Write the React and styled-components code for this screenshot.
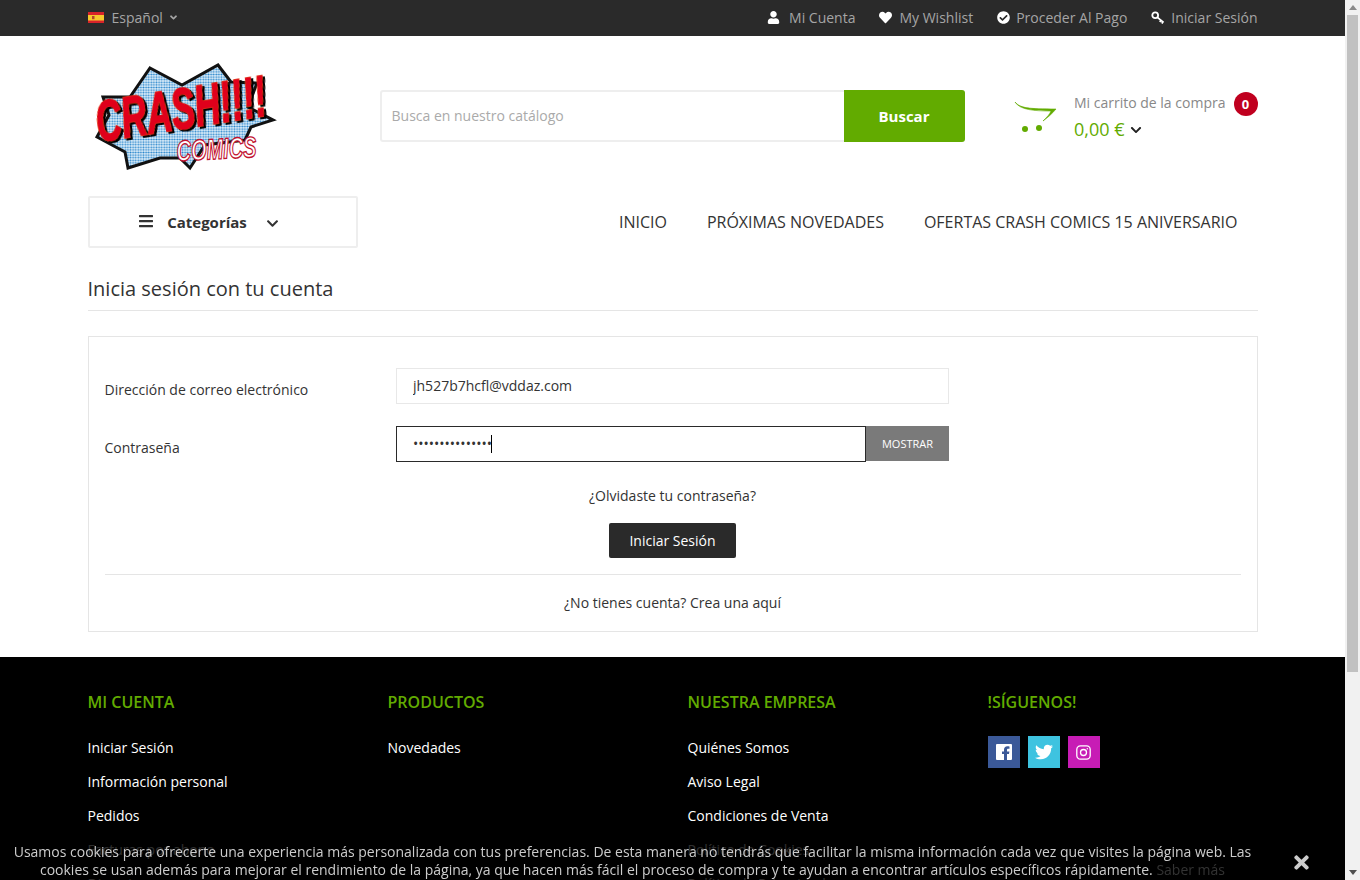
import React from "react";
import styled, { createGlobalStyle } from "styled-components";
import {
  FaUser,
  FaHeart,
  FaCheckCircle,
  FaBars,
  FaChevronDown,
  FaAngleDown,
  FaTwitter,
  FaTimes,
} from "react-icons/fa";

const green = "#62ab00";
const dark = "#2a2a2a";

const footerColumns = [
  {
    title: "MI CUENTA",
    links: [
      "Iniciar Sesión",
      "Información personal",
      "Pedidos",
      "Facturas por abono",
      "Direcciones",
    ],
  },
  { title: "PRODUCTOS", links: ["Novedades"] },
  {
    title: "NUESTRA EMPRESA",
    links: [
      "Quiénes Somos",
      "Aviso Legal",
      "Condiciones de Venta",
      "Política de Cookies",
      "Política de Privacidad",
    ],
  },
];

const GlobalStyle = createGlobalStyle`
  body {
    margin: 0;
    padding-right: 15px;
    background: #fff;
    color: #333;
    font-family: "Open Sans", "Noto Sans", sans-serif;
    font-size: 14px;
  }
  * {
    box-sizing: border-box;
  }
`;

const ScrollTrack = styled.div`
  position: fixed;
  top: 0;
  right: 0;
  bottom: 0;
  width: 15px;
  background: #f1f1f1;
  display: flex;
  flex-direction: column;
`;

const ScrollArrow = styled.div`
  height: 15px;
  flex: none;
  display: flex;
  align-items: center;
  justify-content: center;

  &::before {
    content: "";
    border-left: 4px solid transparent;
    border-right: 4px solid transparent;
    border-${(props) => (props.$down ? "top" : "bottom")}: 5px solid
      ${(props) => (props.$down ? "#505050" : "#8a8a8a")};
  }
`;

const ScrollThumb = styled.div`
  height: 657px;
  margin: 0 2px;
  background: #c1c1c1;
`;

const ScrollRest = styled.div`
  flex: 1;
`;

const Container = styled.div`
  width: 1170px;
  margin: 0 auto;
`;

const TopBar = styled.div`
  height: 36px;
  background: ${dark};
  color: #a5a5a5;
`;

const TopInner = styled(Container)`
  height: 35px;
  display: flex;
  align-items: center;
  justify-content: space-between;
`;

const Language = styled.div`
  display: flex;
  align-items: center;
  font-size: 14px;

  svg.flag {
    margin-right: 8px;
  }
  svg.caret {
    margin-left: 5px;
    font-size: 11px;
  }
`;

const TopLinks = styled.div`
  display: flex;
  align-items: center;
  gap: 24px;
`;

const TopLink = styled.a`
  display: flex;
  align-items: center;
  gap: ${(props) => props.$gap || 6}px;

  svg {
    color: #fff;
    font-size: 13px;
  }
`;

const Header = styled(Container)`
  height: 160px;
  display: flex;
  align-items: flex-start;
  padding-top: 19px;
`;

const LogoBox = styled.div`
  width: 292px;
  flex: none;
`;

const SearchBox = styled.div`
  width: 585px;
  height: 52px;
  margin-top: 35px;
  display: flex;
`;

const SearchInput = styled.div`
  flex: 1;
  border: 2px solid #eee;
  border-right: 0;
  border-radius: 3px 0 0 3px;
  padding: 0 10px;
  line-height: 47px;
  color: #aaa;
`;

const SearchButton = styled.div`
  width: 121px;
  background: ${green};
  border-radius: 0 3px 3px 0;
  color: #fff;
  font-weight: 700;
  font-size: 15px;
  line-height: 53px;
  text-align: center;
`;

const Cart = styled.div`
  margin-left: 49px;
  margin-top: 36px;
  flex: 1;
  display: flex;
  position: relative;
`;

const CartIconBox = styled.div`
  margin-top: 9px;
`;

const CartText = styled.div`
  margin-left: 16.5px;
`;

const CartLabel = styled.div`
  color: #888;
  line-height: 19px;
  margin-top: 2px;
`;

const CartTotal = styled.div`
  display: flex;
  align-items: center;
  color: ${green};
  font-size: 18px;
  line-height: 24px;
  margin-top: 5px;

  svg {
    color: #222;
    font-size: 12px;
    margin-left: 5px;
    margin-top: 2px;
  }
`;

const CartBadge = styled.span`
  position: absolute;
  top: 1px;
  right: 0;
  width: 24px;
  height: 24px;
  border-radius: 50%;
  background: #c0001f;
  color: #fff;
  font-weight: 700;
  font-size: 13px;
  line-height: 24px;
  text-align: center;
`;

const NavRow = styled(Container)`
  height: 52px;
  display: flex;
  align-items: center;
  justify-content: space-between;
`;

const CategoryBox = styled.div`
  width: 270px;
  height: 52px;
  border: 2px solid #eee;
  border-radius: 2px;
  padding-right: 28px;
  display: flex;
  align-items: center;
  justify-content: center;
  color: #333;
  font-weight: 700;
  font-size: 15px;

  svg.bars {
    font-size: 16px;
    margin-right: 13px;
    margin-top: -3px;
  }
  svg.chev {
    font-size: 13px;
    margin-left: 19px;
    margin-top: 3px;
  }
`;

const Nav = styled.nav`
  display: flex;
  gap: 40px;
  padding-right: 20px;
  font-size: 16px;
  color: #333;
`;

const Main = styled(Container)`
  padding-top: 27px;
  padding-bottom: 25px;
`;

const PageTitle = styled.h1`
  margin: 0 0 25px;
  padding-bottom: 8px;
  border-bottom: 1px solid #e5e5e5;
  font-size: 20px;
  font-weight: 400;
  line-height: 27px;
  color: #333;
`;

const Card = styled.section`
  height: 296px;
  border: 1px solid #e5e5e5;
  padding: 31px 16px 0;
`;

const FormRow = styled.div`
  display: flex;
  height: 36px;
  margin-bottom: 22px;
`;

const FieldLabel = styled.label`
  width: 291.5px;
  flex: none;
  padding-top: 12px;
  line-height: 19px;
`;

const TextInput = styled.input`
  width: ${(props) => props.$width || "553px"};
  height: 36px;
  border: 1px solid ${(props) => (props.$active ? dark : "#e8e8e8")};
  outline: 0;
  padding: 0 16px 2px;
  font: inherit;
  color: #333;
  background: #fff;
`;

const PasswordField = styled.div`
  position: relative;
  display: flex;
`;

const Caret = styled.span`
  position: absolute;
  left: 95px;
  top: 9px;
  width: 1px;
  height: 18px;
  background: #000;
`;

const ShowButton = styled.div`
  width: 83px;
  height: 35px;
  background: #7a7a7a;
  color: #fff;
  font-size: 11px;
  line-height: 36px;
  text-align: center;
`;

const Forgot = styled.div`
  text-align: center;
  line-height: 19px;
  padding-top: 2px;
  color: #333;
`;

const LoginButton = styled.div`
  width: 127px;
  height: 35px;
  margin: 18px auto 16px;
  background: ${dark};
  border-radius: 2px;
  color: #fff;
  line-height: 35px;
  text-align: center;
`;

const Divider = styled.hr`
  margin: 0;
  border: 0;
  border-top: 1px solid #e5e5e5;
`;

const NoAccount = styled.div`
  text-align: center;
  line-height: 19px;
  margin-top: 18px;
`;

const Footer = styled.footer`
  background: #000;
  min-height: 481px;
  padding: 34px 0 40px;
`;

const FooterGrid = styled(Container)`
  display: grid;
  grid-template-columns: repeat(4, 300px);
`;

const FooterTitle = styled.h4`
  margin: 0 0 25px;
  color: ${green};
  font-size: 16px;
  font-weight: 600;
  line-height: 22px;
`;

const FooterLink = styled.a`
  display: block;
  color: #fff;
  line-height: 19px;
  margin-bottom: 15px;
`;

const Socials = styled.div`
  display: flex;
  gap: 8px;
  margin-top: -2px;
`;

const Social = styled.a`
  width: 32px;
  height: 32px;
  background: ${(props) => props.$bg};
  color: #fff;
  display: flex;
  align-items: center;
  justify-content: center;
  font-size: 18px;
`;

const CookieBar = styled.div`
  position: fixed;
  left: 0;
  right: 15px;
  bottom: 0;
  height: 38px;
  background: rgba(0, 0, 0, 0.82);
  color: #ccc;
  display: flex;
  line-height: 18px;
`;

const CookieText = styled.p`
  margin: 0;
  width: 1265px;
  padding: 1px 12px 0;
  text-align: center;
  overflow: hidden;
`;

const CookieMore = styled.a`
  color: #333;
`;

const CookieClose = styled.span`
  margin-left: 26px;
  margin-top: 10px;
  color: #ccc;
  font-size: 21px;
  line-height: 1;
`;

const Logo = () => (
  <svg width="197" height="125" viewBox="3 0 197 125">
    <defs>
      <pattern id="dots" width="2.6" height="2.6" patternUnits="userSpaceOnUse">
        <rect width="2.6" height="2.6" fill="#e3f1fa" />
        <circle cx="1.3" cy="1.3" r="0.95" fill="#2a86cc" />
      </pattern>
    </defs>
    <polygon
      points="65,13 97,30 133,10 146,27 172,28 163,52 188,65 166,72 160,85 120,90 105,113 95,103 75,103 43,113 40,97 12,82 24,60 18,42 45,42"
      fill="url(#dots)"
      stroke="#111"
      strokeWidth="3"
    />
    <text
      x="14"
      y="87"
      fontFamily="'Liberation Sans', sans-serif"
      fontWeight="700"
      fontStyle="italic"
      fontSize="58"
      fill="#e0001b"
      stroke="#e0001b"
      strokeWidth="1.6"
      textLength="172"
      lengthAdjust="spacingAndGlyphs"
      transform="rotate(-9 14 87)"
      style={{ filter: "drop-shadow(0.6px 0.6px 0 #f2c200) drop-shadow(2px 2px 0 #000)" }}
    >
      CRASH!!!!
    </text>
    <text
      x="92"
      y="106"
      fontFamily="'Liberation Sans', sans-serif"
      fontWeight="700"
      fontStyle="italic"
      fontSize="29"
      fill="#fff"
      stroke="#c2122f"
      strokeWidth="1.4"
      textLength="80"
      lengthAdjust="spacingAndGlyphs"
      transform="rotate(-3 92 106)"
    >
      COMICS
    </text>
  </svg>
);

const SpainFlag = () => (
  <svg className="flag" width="16" height="11" viewBox="0 0 16 11">
    <rect width="16" height="11" fill="#d8232a" />
    <rect y="3" width="16" height="5.5" fill="#f6c92c" />
    <rect x="4" y="4" width="2.5" height="3.2" fill="#b5462a" />
  </svg>
);

const KeyIcon = () => (
  <svg width="14" height="14" viewBox="0 0 14 14" fill="none" stroke="#fff">
    <circle cx="4.2" cy="4.2" r="2.9" strokeWidth="1.8" />
    <path d="M6.4 6.4 L12.6 11.4 M10 9.2 L8.8 11 M12 10.8 L10.8 12.6" strokeWidth="1.8" />
  </svg>
);

const CartIcon = () => (
  <svg width="44" height="36" viewBox="0 0 44 36">
    <path
      d="M1 2 C6 8 14 9 42 9 C38 14 33 18 29 21 C33 17 36 14 37 11 C20 11 6 10 1 2 Z"
      fill={green}
      stroke={green}
      strokeWidth="0.6"
    />
    <circle cx="11" cy="29" r="3" fill={green} />
    <circle cx="25" cy="28" r="3" fill={green} />
  </svg>
);

const FacebookIcon = () => (
  <svg width="16" height="16" viewBox="0 0 16 16">
    <path
      d="M1 0h14a1 1 0 0 1 1 1v14a1 1 0 0 1-1 1h-4V10h2l.4-2.5H11V6c0-.8.3-1.2 1.2-1.2h1.3V2.5C13 2.4 12.2 2.3 11.3 2.3 9.3 2.3 8 3.5 8 5.7v1.8H6V10h2v6H1a1 1 0 0 1-1-1V1a1 1 0 0 1 1-1z"
      fill="#fff"
    />
  </svg>
);

const InstagramIcon = () => (
  <svg width="15" height="15" viewBox="0 0 15 15" fill="none" stroke="#fff" strokeWidth="1.3">
    <rect x="0.8" y="0.8" width="13.4" height="13.4" rx="3.6" />
    <circle cx="7.5" cy="7.5" r="3" />
    <circle cx="11.3" cy="3.7" r="0.7" fill="#fff" stroke="none" />
  </svg>
);

const App = () => {
  return (
    <>
      <GlobalStyle />
      <TopBar>
        <TopInner>
          <Language>
            <SpainFlag />
            Español
            <FaAngleDown className="caret" />
          </Language>
          <TopLinks>
            <TopLink $gap={9}>
              <FaUser />
              Mi Cuenta
            </TopLink>
            <TopLink $gap={7}>
              <FaHeart />
              My Wishlist
            </TopLink>
            <TopLink>
              <FaCheckCircle />
              Proceder Al Pago
            </TopLink>
            <TopLink>
              <KeyIcon />
              Iniciar Sesión
            </TopLink>
          </TopLinks>
        </TopInner>
      </TopBar>

      <Header>
        <LogoBox>
          <Logo />
        </LogoBox>
        <SearchBox>
          <SearchInput>Busca en nuestro catálogo</SearchInput>
          <SearchButton>Buscar</SearchButton>
        </SearchBox>
        <Cart>
          <CartIconBox>
            <CartIcon />
          </CartIconBox>
          <CartText>
            <CartLabel>Mi carrito de la compra</CartLabel>
            <CartTotal>
              0,00 €
              <FaChevronDown />
            </CartTotal>
          </CartText>
          <CartBadge>0</CartBadge>
        </Cart>
      </Header>

      <NavRow>
        <CategoryBox>
          <FaBars className="bars" />
          Categorías
          <FaChevronDown className="chev" />
        </CategoryBox>
        <Nav>
          <a>INICIO</a>
          <a>PRÓXIMAS NOVEDADES</a>
          <a>OFERTAS CRASH COMICS 15 ANIVERSARIO</a>
        </Nav>
      </NavRow>

      <Main>
        <PageTitle>Inicia sesión con tu cuenta</PageTitle>
        <Card>
          <FormRow>
            <FieldLabel>Dirección de correo electrónico</FieldLabel>
            <TextInput type="text" defaultValue="jh527b7hcfl@vddaz.com" />
          </FormRow>
          <FormRow>
            <FieldLabel>Contraseña</FieldLabel>
            <PasswordField>
              <TextInput
                type="password"
                defaultValue="abcdefghijklmno"
                $width="470px"
                $active
              />
              <Caret />
            </PasswordField>
            <ShowButton>MOSTRAR</ShowButton>
          </FormRow>
          <Forgot>¿Olvidaste tu contraseña?</Forgot>
          <LoginButton>Iniciar Sesión</LoginButton>
          <Divider />
          <NoAccount>¿No tienes cuenta? Crea una aquí</NoAccount>
        </Card>
      </Main>

      <Footer>
        <FooterGrid>
          {footerColumns.map((col) => (
            <div key={col.title}>
              <FooterTitle>{col.title}</FooterTitle>
              {col.links.map((link) => (
                <FooterLink key={link}>{link}</FooterLink>
              ))}
            </div>
          ))}
          <div>
            <FooterTitle>!SÍGUENOS!</FooterTitle>
            <Socials>
              <Social $bg="#3b5998">
                <FacebookIcon />
              </Social>
              <Social $bg="#3ec3e0">
                <FaTwitter />
              </Social>
              <Social $bg="#c71cb5">
                <InstagramIcon />
              </Social>
            </Socials>
          </div>
        </FooterGrid>
      </Footer>

      <CookieBar>
        <CookieText>
          Usamos cookies para ofrecerte una experiencia más personalizada con tus
          preferencias. De esta manera no tendrás que facilitar la misma información
          cada vez que visites la página web. Las cookies se usan además para mejorar
          el rendimiento de la página, ya que hacen más fácil el proceso de compra y
          te ayudan a encontrar artículos específicos rápidamente.{" "}
          <CookieMore>Saber más</CookieMore>
        </CookieText>
        <CookieClose>
          <FaTimes />
        </CookieClose>
      </CookieBar>

      <ScrollTrack>
        <ScrollArrow />
        <ScrollThumb />
        <ScrollRest />
        <ScrollArrow $down />
      </ScrollTrack>
    </>
  );
};

export default App;
